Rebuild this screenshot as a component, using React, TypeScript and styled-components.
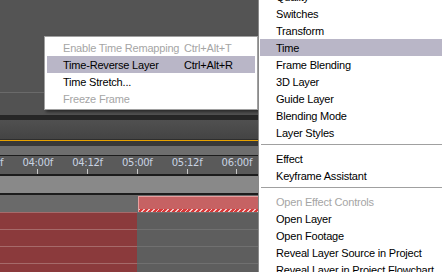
import * as React from "react";
import styled, { createGlobalStyle } from "styled-components";

const GlobalStyle = createGlobalStyle`
  html, body {
    margin: 0;
    padding: 0;
    background: #535353;
    overflow: hidden;
  }
`;

type Item = { label: string; shortcut?: string; disabled?: boolean; active?: boolean; sep?: boolean };

const timeItems: Item[] = [
  { label: "Enable Time Remapping", shortcut: "Ctrl+Alt+T", disabled: true },
  { label: "Time-Reverse Layer", shortcut: "Ctrl+Alt+R", active: true },
  { label: "Time Stretch..." },
  { label: "Freeze Frame", disabled: true },
];

const layerItems: Item[] = [
  { label: "Quality" },
  { label: "Switches" },
  { label: "Transform" },
  { label: "Time", active: true },
  { label: "Frame Blending" },
  { label: "3D Layer" },
  { label: "Guide Layer" },
  { label: "Blending Mode" },
  { label: "Layer Styles" },
  { label: "", sep: true },
  { label: "Effect" },
  { label: "Keyframe Assistant" },
  { label: "", sep: true },
  { label: "Open Effect Controls", disabled: true },
  { label: "Open Layer" },
  { label: "Open Footage" },
  { label: "Reveal Layer Source in Project" },
  { label: "Reveal Layer in Project Flowchart" },
];

const ticks = ["03:12f", "04:00f", "04:12f", "05:00f", "05:12f", "06:00f"];

const App = () => {
  return (
    <>
      <GlobalStyle />
      <Screen>
        <LeftPane>
          <TopPanel />
          <LowerPanel />
          <DarkBand />
          <GradientBand />
          <OrangeLine />
          <ShadowBand />
          <NavBar />
          <Ruler>
            {ticks.map((t) => (
              <TickCell key={t}>
                <TickLabel>{t}</TickLabel>
                <TickMark />
              </TickCell>
            ))}
          </Ruler>
          <WorkBar />
          <ClipTrack>
            <ClipGap />
            <Clip />
          </ClipTrack>
          {[0, 1, 2, 3].map((i) => (
            <LayerRow key={i}>
              <LayerBar />
            </LayerRow>
          ))}

          <Popup>
            {timeItems.map((it) => (
              <PopupItem key={it.label} $active={it.active} $disabled={it.disabled}>
                <PopupLabel>{it.label}</PopupLabel>
                <span>{it.shortcut}</span>
              </PopupItem>
            ))}
          </Popup>
        </LeftPane>

        <RightMenu>
          <MenuList>
            {layerItems.map((it, i) =>
              it.sep ? (
                <Separator key={i} />
              ) : (
                <MenuItem key={i} $active={it.active} $disabled={it.disabled}>
                  {it.label}
                </MenuItem>
              )
            )}
          </MenuList>
        </RightMenu>
      </Screen>
    </>
  );
};

export default App;

const Screen = styled.div`
  width: 442px;
  height: 272px;
  display: flex;
  overflow: hidden;
  font-family: "Liberation Sans", Arial, sans-serif;
  font-size: 11px;
  letter-spacing: -0.2px;
`;

const LeftPane = styled.div`
  position: relative;
  width: 258px;
  flex: none;
  display: flex;
  flex-direction: column;
  overflow: hidden;
`;

const TopPanel = styled.div`
  height: 92px;
  flex: none;
  background: #545454;
  border-bottom: 1px solid #6a6a6a;
`;

const LowerPanel = styled.div`
  height: 22px;
  flex: none;
  background: #525252;
`;

const DarkBand = styled.div`
  height: 5px;
  flex: none;
  background: #262626;
`;

const GradientBand = styled.div`
  height: 19px;
  flex: none;
  background: linear-gradient(#505050, #444444);
  border-bottom: 1px solid #2e2e2e;
`;

const OrangeLine = styled.div`
  height: 1px;
  flex: none;
  background: #e8a200;
`;

const ShadowBand = styled.div`
  height: 5px;
  flex: none;
  background: #383838;
`;

const NavBar = styled.div`
  height: 9px;
  flex: none;
  background: #6e6e6e;
  border-bottom: 1px solid #1c1c1c;
`;

const Ruler = styled.div`
  height: 18px;
  flex: none;
  display: flex;
  margin-left: -37px;
  background: #5a5a5a;
  border-bottom: 2px solid #1c1c1c;
`;

const TickCell = styled.div`
  width: 49.8px;
  flex: none;
  display: flex;
  flex-direction: column;
  align-items: center;
`;

const TickLabel = styled.span`
  font-family: "DejaVu Sans", sans-serif;
  font-size: 10px;
  line-height: 12px;
  margin-top: 1px;
  color: #c9d3e2;
  letter-spacing: -0.3px;
`;

const TickMark = styled.div`
  width: 1px;
  height: 6px;
  background: #c8c8c8;
`;

const WorkBar = styled.div`
  height: 17px;
  flex: none;
  background: #898989;
  border-bottom: 2px solid #1c1c1c;
`;

const ClipTrack = styled.div`
  height: 17px;
  flex: none;
  display: flex;
  background: #6a6a6a;
  padding-top: 1px;
  box-sizing: border-box;
`;

const ClipGap = styled.div`
  width: 138px;
  flex: none;
`;

const Clip = styled.div`
  flex: 1;
  box-sizing: border-box;
  border-top: 1px solid #e7a0a0;
  border-left: 1px solid #e7a0a0;
  background:
    repeating-linear-gradient(135deg, #f2c8c8 0 1.2px, #d83838 1.2px 3.4px) bottom / 100% 3px no-repeat,
    #c66263;
`;

const LayerRow = styled.div`
  height: 17px;
  flex: none;
  display: flex;
  background: #5e5e5e;
  border-top: 1px solid #707070;
  box-sizing: border-box;
`;

const LayerBar = styled.div`
  width: 137px;
  background: #8b3a3c;
  border-top: 1px solid #a66a6a;
  margin-top: -1px;
`;

const Popup = styled.div`
  position: absolute;
  left: 44px;
  top: 36px;
  width: 214px;
  box-sizing: border-box;
  padding: 2px;
  background: #ffffff;
  border: 1px solid #a0a0a0;
  box-shadow: 2px 2px 3px rgba(0, 0, 0, 0.5);
`;

const PopupItem = styled.div<{ $active?: boolean; $disabled?: boolean }>`
  display: flex;
  align-items: center;
  height: 17px;
  padding-left: 16px;
  background: ${(p) => (p.$active ? "#b9b6c7" : "transparent")};
  color: ${(p) => (p.$disabled ? "#a5a5a5" : "#000000")};
  white-space: nowrap;
`;

const PopupLabel = styled.span`
  width: 121px;
  flex: none;
`;

const RightMenu = styled.div`
  flex: 1;
  background: #ffffff;
  border-left: 1px solid #8a8a8a;
  padding-left: 1px;
  overflow: hidden;
`;

const MenuList = styled.div`
  margin-top: -12px;
  display: flex;
  flex-direction: column;
`;

const MenuItem = styled.div<{ $active?: boolean; $disabled?: boolean }>`
  height: 17px;
  flex: none;
  display: flex;
  align-items: center;
  padding-left: 16px;
  white-space: nowrap;
  background: ${(p) => (p.$active ? "#b9b6c7" : "transparent")};
  color: ${(p) => (p.$disabled ? "#a5a5a5" : "#000000")};
`;

const Separator = styled.div`
  height: 9px;
  flex: none;
  box-sizing: border-box;
  padding-top: 3px;
  margin-left: 1px;
  &::after {
    content: "";
    display: block;
    height: 1px;
    background: #a0a0a0;
  }
`;
